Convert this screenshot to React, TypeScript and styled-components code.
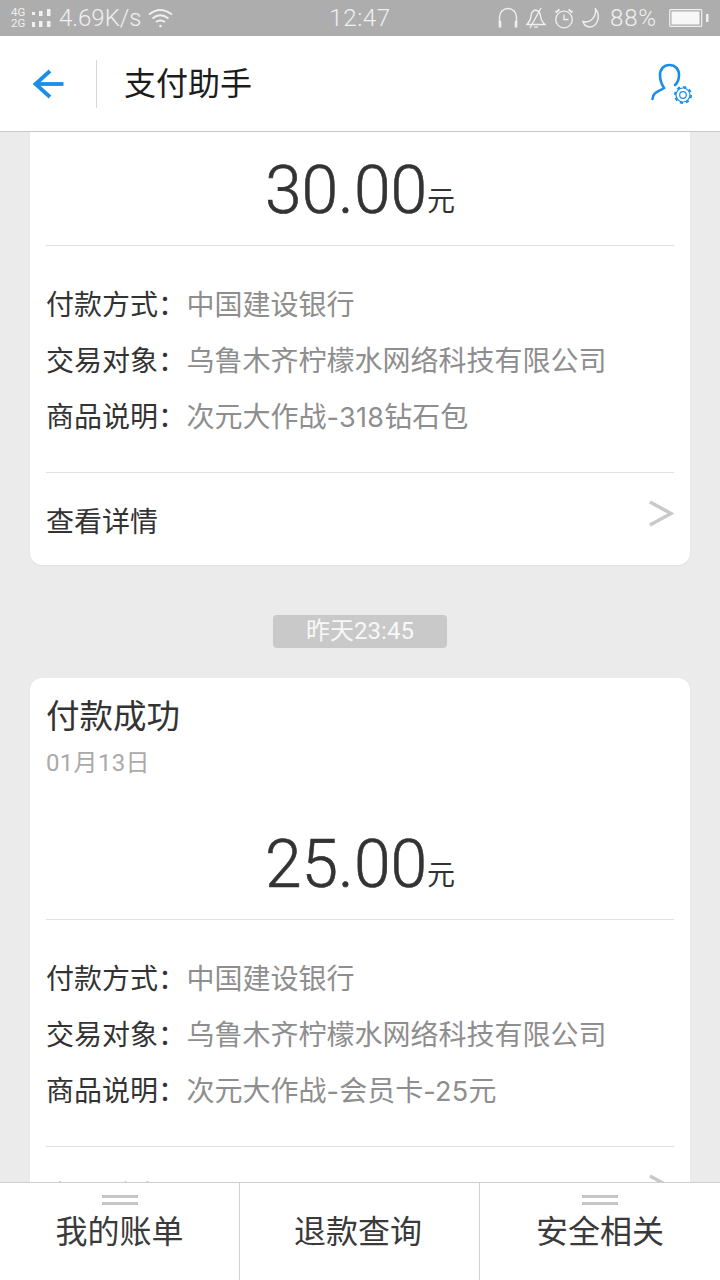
import styled, { createGlobalStyle } from "styled-components";

const GlobalStyle = createGlobalStyle`
  html, body {
    margin: 0;
    padding: 0;
  }
  body {
    font-family: Roboto, "Noto Sans CJK SC", sans-serif;
    background: #ebebeb;
  }
`;

const Page = styled.div`
  width: 720px;
  height: 1280px;
  display: flex;
  flex-direction: column;
  overflow: hidden;
`;

const StatusBar = styled.div`
  height: 36px;
  flex: none;
  background: #adadad;
  color: #f0f0f0;
  display: grid;
  grid-template-columns: 1fr auto 1fr;
  align-items: center;
  padding: 0 11px;
  font-size: 24px;
  font-weight: 300;
`;

const StatusLeft = styled.div`
  display: flex;
  align-items: center;
`;

const StatusRight = styled.div`
  display: flex;
  align-items: center;
  justify-content: flex-end;
  gap: 8px;
`;

const NetLabel = styled.div`
  font-size: 11.5px;
  line-height: 11px;
  font-weight: 400;
  width: 20px;
`;

const Speed = styled.span`
  margin: 0 6px 0 8px;
`;

const Clock = styled.span`
  letter-spacing: 0.6px;
`;

const Battery = styled.span`
  letter-spacing: 0.9px;
  margin: 0 4px 0 0;
`;

const Header = styled.header`
  height: 95px;
  flex: none;
  background: #fff;
  border-bottom: 1px solid #c8c8c8;
  display: flex;
  align-items: center;
  padding: 0 26px 0 32px;
`;

const BackButton = styled.div`
  width: 64px;
  height: 48px;
  border-right: 1px solid #d8d8d8;
  display: flex;
  align-items: center;
  margin-right: 27px;
`;

const Title = styled.h1`
  flex: 1;
  margin: 0;
  padding-bottom: 5px;
  font-size: 32px;
  font-weight: 400;
  color: #1c1c1c;
`;

const Scroller = styled.main`
  flex: 1;
  min-height: 0;
  overflow: hidden;
  padding: 0 30px;
  background: #ebebeb;
`;

const Card = styled.section<{ $cut?: boolean }>`
  background: #fff;
  border-radius: ${(p) => (p.$cut ? "0 0 12px 12px" : "12px")};
  box-shadow: 0 1px 2px rgba(0, 0, 0, 0.06);
  padding: 0 16px;
`;

const CardTitle = styled.div`
  font-size: 33.5px;
  line-height: 40px;
  padding-top: 19px;
  color: #333;
`;

const CardDate = styled.div`
  font-size: 24px;
  line-height: 30px;
  margin-top: 11px;
  letter-spacing: 0.3px;
  color: #aaa;
`;

const Amount = styled.div<{ $cut?: boolean }>`
  height: 113px;
  margin-top: ${(p) => (p.$cut ? "0" : "28px")};
  border-bottom: 1px solid #e2e2e2;
  display: flex;
  justify-content: center;
  align-items: baseline;
  color: #333;
  font-size: 66px;
  font-weight: 300;
  -webkit-text-stroke: 0.6px #333;
  line-height: 117px;
`;

const Unit = styled.span`
  font-size: 28px;
  font-weight: 400;
  -webkit-text-stroke: 0;
  transform: translateY(-2px);
`;

const Rows = styled.div`
  padding: 32px 0 26px;
  border-bottom: 1px solid #e2e2e2;
  display: flex;
  flex-direction: column;
`;

const Row = styled.div`
  display: flex;
  font-size: 28px;
  line-height: 56px;
  height: 56px;
`;

const RowLabel = styled.span`
  color: #333;
  width: 140.5px;
  flex: none;
`;

const RowValue = styled.span`
  color: #8e8e8e;
`;

const Latin = styled.span`
  font-family: Inter, sans-serif;
  font-size: 27px;
  letter-spacing: 0.3px;
`;

const DetailRow = styled.div`
  height: 92px;
  box-sizing: border-box;
  padding-top: 2px;
  display: flex;
  align-items: center;
  justify-content: space-between;
  font-size: 28px;
  color: #333;

  svg {
    margin-bottom: 14px;
  }
`;

const TimeWrap = styled.div`
  height: 113px;
  box-sizing: border-box;
  padding-top: 50px;
  display: flex;
  justify-content: center;
`;

const TimePill = styled.div`
  width: 174px;
  height: 33px;
  border-radius: 4px;
  background: #c9c9c9;
  color: #f8f8f8;
  font-size: 24px;
  line-height: 33px;
  text-align: center;
`;

const BottomBar = styled.nav`
  height: 97px;
  flex: none;
  background: #fff;
  border-top: 1px solid #cfcfcf;
  display: grid;
  grid-template-columns: 240px 240px 240px;
`;

const Tab = styled.div`
  position: relative;
  box-sizing: border-box;
  font-size: 32px;
  color: #3a3a3a;
  text-align: center;
  line-height: 98px;
  border-right: 1px solid #d0d0d0;

  &:nth-child(2) {
    padding-right: 3px;
  }

  &:last-child {
    border-right: 0;
  }
`;

const MenuMark = styled.span`
  position: absolute;
  top: 12px;
  left: 50%;
  width: 36px;
  height: 4px;
  margin-left: -18px;
  border-top: 3px solid #c6c6c6;
  border-bottom: 3px solid #c6c6c6;
`;

function Chevron() {
  return (
    <svg width="26" height="27" viewBox="0 0 26 27" fill="none">
      <path d="M2 2 L23 13.5 L2 25" stroke="#c9c9c9" strokeWidth="3.5" />
    </svg>
  );
}

function Payment({ desc }: { desc: React.ReactNode }) {
  return (
    <>
      <Rows>
        <Row>
          <RowLabel>付款方式：</RowLabel>
          <RowValue>中国建设银行</RowValue>
        </Row>
        <Row>
          <RowLabel>交易对象：</RowLabel>
          <RowValue>乌鲁木齐柠檬水网络科技有限公司</RowValue>
        </Row>
        <Row>
          <RowLabel>商品说明：</RowLabel>
          <RowValue>{desc}</RowValue>
        </Row>
      </Rows>
      <DetailRow>
        查看详情
        <Chevron />
      </DetailRow>
    </>
  );
}

export default function App() {
  return (
    <Page>
      <GlobalStyle />
      <StatusBar>
        <StatusLeft>
          <NetLabel>
            4G
            <br />
            2G
          </NetLabel>
          <svg width="20" height="20" viewBox="0 0 20 20" fill="#f0f0f0">
            <rect x="1" y="4" width="3" height="3" />
            <rect x="1" y="14" width="3" height="5" />
            <rect x="8" y="3" width="3.5" height="5" />
            <rect x="8" y="13" width="3.5" height="6" />
            <rect x="16" y="1" width="3.5" height="7" />
            <rect x="16" y="13" width="3.5" height="6" />
          </svg>
          <Speed>4.69K/s</Speed>
          <svg width="25" height="20" viewBox="0 0 25 20" fill="none" stroke="#f0f0f0" strokeWidth="1.8">
            <path d="M1 6.5 Q12 -2.5 24 6.5" />
            <path d="M4.5 10.5 Q12 4 20.5 10.5" />
            <path d="M8 14 Q12 11 17 14" />
            <circle cx="12.5" cy="18" r="1.3" fill="#f0f0f0" stroke="none" />
          </svg>
        </StatusLeft>
        <Clock>12:47</Clock>
        <StatusRight>
          <svg width="20" height="22" viewBox="0 0 20 22" fill="none" stroke="#f0f0f0" strokeWidth="1.4">
            <path d="M1.5 15 V10 A8.5 8.5 0 0 1 18.5 10 V15" />
            <path d="M2 14 V20.5 M18 14 V20.5" strokeWidth="2.6" />
          </svg>
          <svg width="20" height="22" viewBox="0 0 20 22" fill="none" stroke="#f0f0f0" strokeWidth="1.3">
            <path d="M1 17.5 Q4.5 14 5 9 Q5.5 4 9.5 3 Q14 4 14.5 9 Q15 14 19 17.5 Z" />
            <path d="M15 1 L4 21" />
            <path d="M8 20 H12" />
          </svg>
          <svg width="20" height="21" viewBox="0 0 20 21" fill="none" stroke="#f0f0f0" strokeWidth="1.3">
            <circle cx="10" cy="11.5" r="8.3" />
            <path d="M10 6.5 V11.5 H14.5" />
            <path d="M1.5 4.5 L5.5 1.5 M18.5 4.5 L14.5 1.5" strokeWidth="1.9" />
          </svg>
          <svg width="20" height="20" viewBox="0 0 20 20" fill="none" stroke="#f0f0f0" strokeWidth="1.4">
            <path d="M13.5 1 C19.5 8 15 19 7.5 19 C4.5 19 1.5 16.5 1 13.5 C7 15.5 14.5 10.5 13.5 1 Z" />
          </svg>
          <Battery>88%</Battery>
          <svg width="40" height="20" viewBox="0 0 40 20" fill="none">
            <rect x="0.7" y="1.7" width="32" height="16.6" rx="1" stroke="#f0f0f0" strokeWidth="1.2" />
            <rect x="2.5" y="3.5" width="28" height="13" fill="#f7f7f7" />
            <rect x="37" y="6" width="2.5" height="8" fill="#f0f0f0" />
          </svg>
        </StatusRight>
      </StatusBar>

      <Header>
        <BackButton>
          <svg width="32" height="30" viewBox="0 0 32 30" fill="none" stroke="#1a8ee8" strokeWidth="3.8">
            <path d="M31.5 15 H3" />
            <path d="M18 2 L3.5 15 L18 28" />
          </svg>
        </BackButton>
        <Title>支付助手</Title>
        <svg width="44" height="42" viewBox="0 0 44 42" fill="none" stroke="#1a8ee8">
          <path
            d="M2.5 36 C3 29 8 29 14 25 C12 22 10 17 10 12 C10 6 14 2 19.5 2 C25 2 29 6 29 12 C29 16 27.5 20 25 22"
            strokeWidth="2.6"
            strokeLinecap="round"
          />
          <circle cx="33" cy="32" r="3.3" strokeWidth="1.2" />
          <circle cx="33" cy="32" r="7" strokeWidth="1.2" />
          <circle cx="33" cy="32" r="8" strokeWidth="2" strokeDasharray="3.1 3.18" />
        </svg>
      </Header>

      <Scroller>
        <Card $cut>
          <Amount $cut>
            30.00<Unit>元</Unit>
          </Amount>
          <Payment
            desc={
              <>
                次元大作战<Latin>-318</Latin>钻石包
              </>
            }
          />
        </Card>
        <TimeWrap>
          <TimePill>昨天23:45</TimePill>
        </TimeWrap>
        <Card>
          <CardTitle>付款成功</CardTitle>
          <CardDate>01月13日</CardDate>
          <Amount>
            25.00<Unit>元</Unit>
          </Amount>
          <Payment
            desc={
              <>
                次元大作战<Latin>-</Latin>会员卡<Latin>-25</Latin>元
              </>
            }
          />
        </Card>
      </Scroller>

      <BottomBar>
        <Tab>
          <MenuMark />
          我的账单
        </Tab>
        <Tab>退款查询</Tab>
        <Tab>
          <MenuMark />
          安全相关
        </Tab>
      </BottomBar>
    </Page>
  );
}
